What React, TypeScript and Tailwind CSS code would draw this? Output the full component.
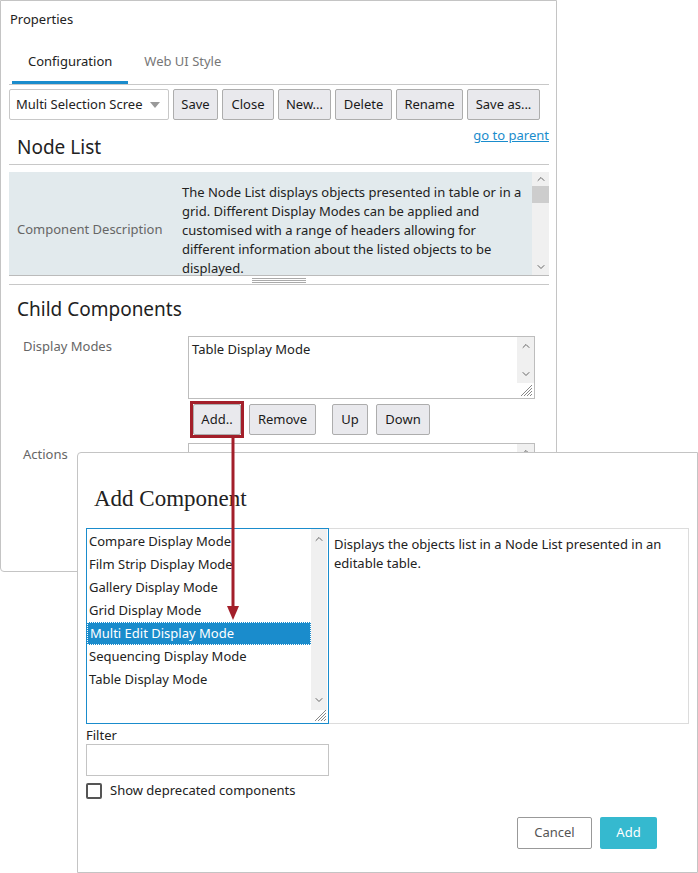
import { ChevronUp, ChevronDown } from 'lucide-react';

const FONT = 'font-["Noto_Sans",sans-serif]';

const DISPLAY_MODES = [
  'Compare Display Mode',
  'Film Strip Display Mode',
  'Gallery Display Mode',
  'Grid Display Mode',
  'Multi Edit Display Mode',
  'Sequencing Display Mode',
  'Table Display Mode',
];

function Grip() {
  return (
    <svg width="12" height="12" viewBox="0 0 12 12" className="absolute bottom-[1px] right-[1px]">
      <path d="M11 3 L3 11 M11 6 L6 11 M11 9 L9 11 M11 0 L0 11" stroke="#888" strokeWidth="1" />
    </svg>
  );
}

function ToolButton({ label, className = '' }: { label: string; className?: string }) {
  return (
    <button
      type="button"
      className={`h-[31px] rounded-[2px] border border-[#adadad] bg-[#e9e9ed] px-0 text-[13px] text-[#1a1a1a] ${className}`}
    >
      {label}
    </button>
  );
}

function PropertiesPanel() {
  return (
    <div className="h-[572px] w-[557px] rounded-b-[4px] border border-[#c4c4c4] pl-[8px] pr-[7px] pt-[9px]">
      <div className="pl-[1px] text-[13px] text-[#222]">Properties</div>

      {/* tabs */}
      <div className="mt-[22px] flex border-b border-[#c8c8c8] pl-[3px]">
        <div className="border-b-[3px] border-[#1a8ccc] px-[16px] pb-[10px] text-[13px] text-[#222]">Configuration</div>
        <div className="px-[16px] pb-[10px] text-[13px] text-[#777]">Web UI Style</div>
      </div>

      {/* toolbar */}
      <div className="mt-[4px] flex items-center gap-[4px]">
        <div className="flex h-[31px] w-[160px] items-center justify-between rounded-[2px] border border-[#c8c8c8] bg-white pl-[6px] pr-[8px] text-[13px] text-[#222]">
          <span>Multi Selection Scree</span>
          <svg width="10" height="6" viewBox="0 0 10 6">
            <path d="M0 0 L10 0 L5 6 Z" fill="#999" />
          </svg>
        </div>
        <ToolButton label="Save" className="w-[45px]" />
        <ToolButton label="Close" className="w-[52px]" />
        <ToolButton label="New..." className="w-[53px]" />
        <ToolButton label="Delete" className="w-[57px]" />
        <ToolButton label="Rename" className="w-[67px]" />
        <ToolButton label="Save as..." className="w-[73px]" />
      </div>

      <div className="mt-[7px] flex items-start justify-between">
        <div className="pl-[8px] pt-[9px] text-[19px] leading-[22px] text-[#222]">Node List</div>
        <a className="text-[13px] leading-[16px] text-[#1a8ccc] underline">go to parent</a>
      </div>
      <div className="mt-[6px] border-b border-[#c8c8c8]" />

      {/* description box */}
      <div className="mt-[7px] flex h-[103px]">
        <div className="flex flex-1 bg-[#e2eaed]">
          <div className="flex w-[173px] items-center pl-[8px] pt-[12px] text-[13px] text-[#666]">Component Description</div>
          <div className="pt-[11px] text-[13px] leading-[19px] text-[#222]">
            The Node List displays objects presented in table or in a<br />
            grid. Different Display Modes can be applied and<br />
            customised with a range of headers allowing for<br />
            different information about the listed objects to be<br />
            displayed.
          </div>
        </div>
        <div className="flex w-[17px] flex-col items-center bg-[#f0f0f0]">
          <ChevronUp size={12} strokeWidth={2} className="mt-[1px] text-[#666]" />
          <div className="mt-[1px] h-[17px] w-full bg-[#cdcdcd]" />
          <div className="flex-1" />
          <ChevronDown size={12} strokeWidth={2} className="mb-[2px] text-[#666]" />
        </div>
      </div>
      <div className="flex h-[9px] items-center justify-center border-t border-[#bbb]">
        <div className="h-[5px] w-[54px] border-y border-[#aaa]">
          <div className="mt-[1px] h-[1px] w-full bg-[#aaa]" />
        </div>
      </div>
      <div className="border-b border-[#c8c8c8]" />

      <div className="mt-[12px] pl-[8px] text-[19px] leading-[24px] text-[#222]">Child Components</div>

      {/* display modes */}
      <div className="mt-[15px] flex">
        <div className="w-[179px] pl-[14px] pt-[1px] text-[13px] text-[#666]">Display Modes</div>
        <div className="relative h-[63px] w-[347px] border border-[#bdbdbd] bg-white pl-[3px] pt-[3px] text-[13px] text-[#222]">
          Table Display Mode
          <div className="absolute right-0 top-0 flex h-[46px] w-[17px] flex-col items-center justify-between bg-[#f0f0f0] py-[3px]">
            <ChevronUp size={12} strokeWidth={2} className="text-[#666]" />
            <ChevronDown size={12} strokeWidth={2} className="text-[#666]" />
          </div>
          <Grip />
        </div>
      </div>
      <div className="mt-[2px] flex items-center pl-[181px]">
        <div className="border-[3px] border-[#a31f2a] p-0">
          <ToolButton label="Add.." className="h-[30px] w-[48px]" />
        </div>
        <ToolButton label="Remove" className="ml-[5px] h-[30px] w-[67px]" />
        <ToolButton label="Up" className="ml-[16px] h-[30px] w-[36px]" />
        <ToolButton label="Down" className="ml-[8px] h-[30px] w-[54px]" />
      </div>

      {/* actions */}
      <div className="mt-[5px] flex">
        <div className="w-[179px] pl-[14px] pt-[2px] text-[13px] text-[#666]">Actions</div>
        <div className="relative h-[63px] w-[347px] border border-[#bdbdbd] bg-white">
          <div className="absolute right-0 top-0 flex h-[20px] w-[17px] justify-center bg-[#f0f0f0] pt-[2px]">
            <ChevronUp size={12} strokeWidth={2} className="text-[#666]" />
          </div>
        </div>
      </div>
    </div>
  );
}

function AddComponentDialog() {
  return (
    <div className="absolute left-[77px] top-[452px] h-[421px] w-[621px] rounded-tl-[4px] border border-[#c4c4c4] bg-white px-[8px]">
      <div className="mt-[31px] pl-[8px] font-['Liberation_Serif',serif] text-[23px] leading-[30px] text-[#222]">Add Component</div>

      <div className="mt-[14px] flex h-[196px]">
        <div className="relative w-[243px] border border-[#1a8ccc] bg-white">
          <div className="pr-[17px] pt-[1px]">
            {DISPLAY_MODES.map((m) => {
              const sel = m === 'Multi Edit Display Mode';
              return (
                <div
                  key={m}
                  className={`flex h-[23px] items-center pl-[2px] text-[13px] ${
                    sel ? 'border border-dotted border-white bg-[#1a8ccc] pl-[1px] text-white' : 'text-[#222]'
                  }`}
                >
                  {m}
                </div>
              );
            })}
          </div>
          <div className="absolute right-[1px] top-0 flex h-[181px] w-[16px] flex-col items-center justify-between bg-[#f0f0f0] py-[4px]">
            <ChevronUp size={12} strokeWidth={2} className="text-[#666]" />
            <ChevronDown size={12} strokeWidth={2} className="text-[#666]" />
          </div>
          <Grip />
        </div>
        <div className="flex-1 border border-l-0 border-[#dcdcdc] pl-[5px] pt-[6px] text-[13px] leading-[19px] text-[#222]">
          Displays the objects list in a Node List presented in an<br />
          editable table.
        </div>
      </div>

      <div className="mt-[3px] text-[13px] leading-[16px] text-[#222]">Filter</div>
      <div className="mt-[1px] h-[32px] w-[243px] border border-[#c4c4c4] bg-white" />
      <div className="mt-[5px] flex items-center">
        <div className="h-[16px] w-[16px] rounded-[2px] border-2 border-[#555] bg-white" />
        <span className="ml-[8px] text-[13px] text-[#222]">Show deprecated components</span>
      </div>

      <div className="mt-[16px] flex justify-end gap-[8px] pr-[32px]">
        <button type="button" className="h-[32px] w-[75px] rounded-[2px] border border-[#999] bg-white text-[13px] text-[#555]">
          Cancel
        </button>
        <button type="button" className="h-[32px] w-[57px] rounded-[2px] bg-[#35b9cf] text-[13px] text-white">
          Add
        </button>
      </div>
    </div>
  );
}

export default function App() {
  return (
    <div className={`relative h-[873px] w-[698px] overflow-hidden bg-white ${FONT}`}>
      <PropertiesPanel />
      <AddComponentDialog />
      {/* red arrow from Add.. to the selected item */}
      <svg className="pointer-events-none absolute left-[226px] top-[436px]" width="14" height="186" viewBox="0 0 14 186">
        <path d="M7 0 L7 172" stroke="#a31f2a" strokeWidth="3" />
        <path d="M1 170 L13 170 L7 184 Z" fill="#a31f2a" />
      </svg>
    </div>
  );
}
